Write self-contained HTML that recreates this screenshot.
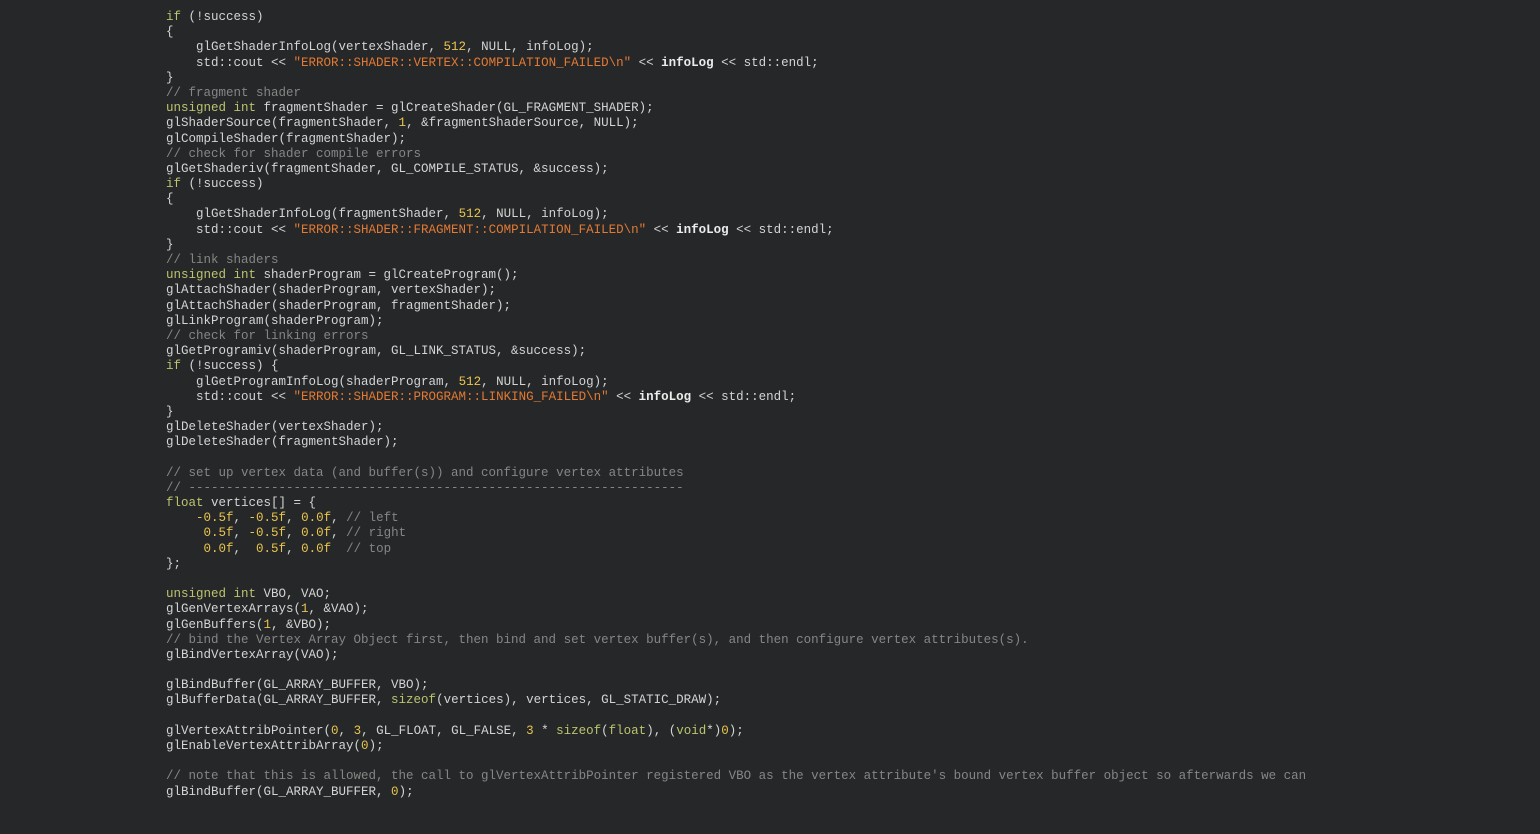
<!DOCTYPE html>
<html><head><meta charset="utf-8"><style>
html,body{margin:0;padding:0;background:#262728;width:1540px;height:834px;overflow:hidden}
pre{position:absolute;left:166px;top:10px;margin:0;font-family:"Liberation Mono",monospace;font-size:12.5px;line-height:15.18px;color:#d4d4d4;letter-spacing:0}
.k{color:#bcc46e}.n{color:#e8c54e}.s{color:#e27a34}.c{color:#868686}.b{color:#ececec;font-weight:bold}
</style></head><body><pre><span class="k">if</span> (!success)
{
    glGetShaderInfoLog(vertexShader, <span class="n">512</span>, NULL, infoLog);
    std::cout &lt;&lt; <span class="s">"ERROR::SHADER::VERTEX::COMPILATION_FAILED\n"</span> &lt;&lt; <span class="b">infoLog</span> &lt;&lt; std::endl;
}
<span class="c">// fragment shader</span>
<span class="k">unsigned int</span> fragmentShader = glCreateShader(GL_FRAGMENT_SHADER);
glShaderSource(fragmentShader, <span class="n">1</span>, &amp;fragmentShaderSource, NULL);
glCompileShader(fragmentShader);
<span class="c">// check for shader compile errors</span>
glGetShaderiv(fragmentShader, GL_COMPILE_STATUS, &amp;success);
<span class="k">if</span> (!success)
{
    glGetShaderInfoLog(fragmentShader, <span class="n">512</span>, NULL, infoLog);
    std::cout &lt;&lt; <span class="s">"ERROR::SHADER::FRAGMENT::COMPILATION_FAILED\n"</span> &lt;&lt; <span class="b">infoLog</span> &lt;&lt; std::endl;
}
<span class="c">// link shaders</span>
<span class="k">unsigned int</span> shaderProgram = glCreateProgram();
glAttachShader(shaderProgram, vertexShader);
glAttachShader(shaderProgram, fragmentShader);
glLinkProgram(shaderProgram);
<span class="c">// check for linking errors</span>
glGetProgramiv(shaderProgram, GL_LINK_STATUS, &amp;success);
<span class="k">if</span> (!success) {
    glGetProgramInfoLog(shaderProgram, <span class="n">512</span>, NULL, infoLog);
    std::cout &lt;&lt; <span class="s">"ERROR::SHADER::PROGRAM::LINKING_FAILED\n"</span> &lt;&lt; <span class="b">infoLog</span> &lt;&lt; std::endl;
}
glDeleteShader(vertexShader);
glDeleteShader(fragmentShader);

<span class="c">// set up vertex data (and buffer(s)) and configure vertex attributes</span>
<span class="c">// ------------------------------------------------------------------</span>
<span class="k">float</span> vertices[] = {
    <span class="n">-0.5f</span>, <span class="n">-0.5f</span>, <span class="n">0.0f</span>, <span class="c">// left</span>
     <span class="n">0.5f</span>, <span class="n">-0.5f</span>, <span class="n">0.0f</span>, <span class="c">// right</span>
     <span class="n">0.0f</span>,  <span class="n">0.5f</span>, <span class="n">0.0f</span>  <span class="c">// top</span>
};

<span class="k">unsigned int</span> VBO, VAO;
glGenVertexArrays(<span class="n">1</span>, &amp;VAO);
glGenBuffers(<span class="n">1</span>, &amp;VBO);
<span class="c">// bind the Vertex Array Object first, then bind and set vertex buffer(s), and then configure vertex attributes(s).</span>
glBindVertexArray(VAO);

glBindBuffer(GL_ARRAY_BUFFER, VBO);
glBufferData(GL_ARRAY_BUFFER, <span class="k">sizeof</span>(vertices), vertices, GL_STATIC_DRAW);

glVertexAttribPointer(<span class="n">0</span>, <span class="n">3</span>, GL_FLOAT, GL_FALSE, <span class="n">3</span> * <span class="k">sizeof</span>(<span class="k">float</span>), (<span class="k">void</span>*)<span class="n">0</span>);
glEnableVertexAttribArray(<span class="n">0</span>);

<span class="c">// note that this is allowed, the call to glVertexAttribPointer registered VBO as the vertex attribute's bound vertex buffer object so afterwards we can</span>
glBindBuffer(GL_ARRAY_BUFFER, <span class="n">0</span>);
</pre></body></html>
